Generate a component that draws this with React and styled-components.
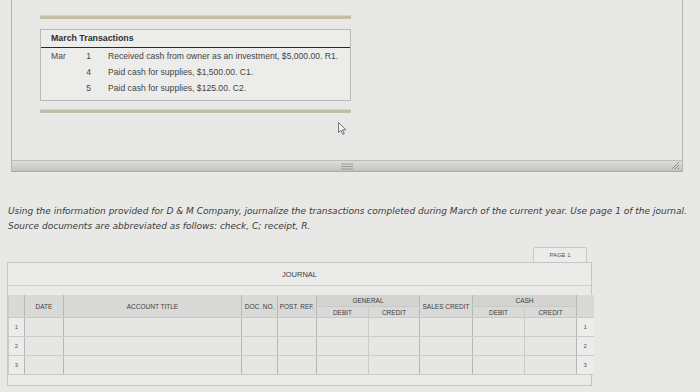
import React from "react";
import styled, { createGlobalStyle } from "styled-components";

const Global = createGlobalStyle`
  body {
    margin: 0;
    background: #e8e8e6;
    font-family: "Liberation Sans", Arial, sans-serif;
    color: #3a3a3a;
  }
`;

const Page = styled.div`
  width: 700px;
  height: 392px;
  overflow: hidden;
  position: relative;
`;

/* ---------- top scroll panel ---------- */
const TopPanel = styled.div`
  margin-left: 11px;
  width: 670px;
  height: 172px;
  border-left: 1px solid #b4b4b2;
  border-right: 1px solid #b4b4b2;
  display: flex;
  flex-direction: column;
  position: relative;
`;

const PanelBody = styled.div`
  flex: 1;
  padding: 15px 0 0 28px;
`;

const Stripe = styled.div`
  width: 311px;
  height: 3px;
  background: #c4bca6;
  border-top: 1px solid #d6d2c6;
  margin-bottom: ${(p) => p.$after || 0}px;
`;

const TransBox = styled.div`
  width: 309px;
  height: 70px;
  border: 1px solid #b9b9b7;
  background: #ececea;
  margin-bottom: 8px;
`;

const TransHead = styled.div`
  height: 17px;
  line-height: 17px;
  padding-left: 10px;
  font-weight: bold;
  font-size: 8.8px;
  color: #2e2e2e;
  border-bottom: 1.5px solid #2a2a2a;
`;

const TransRow = styled.div`
  display: grid;
  grid-template-columns: 30px 10px 1fr;
  padding-left: 10px;
  height: 16px;
  line-height: 16px;
  font-size: 8.6px;
  color: #454545;
  white-space: nowrap;
`;

const Day = styled.span`
  text-align: right;
`;

const Desc = styled.span`
  padding-left: 17px;
`;

const ScrollBar = styled.div`
  height: 10px;
  background: linear-gradient(#dcdcda, #cfcfcd 60%, #c2c2c0);
  border-top: 1px solid #bdbdbb;
  border-bottom: 1px solid #a9a9a7;
  display: flex;
  align-items: center;
  justify-content: center;
  position: relative;
`;

const Resize = styled.svg`
  position: absolute;
  right: 2px;
  bottom: 1px;
`;

const Cursor = styled.svg`
  position: absolute;
  left: 326px;
  top: 122px;
`;

/* ---------- instructions ---------- */
const Instructions = styled.div`
  padding: 32px 0 0 8px;
  font-family: "DejaVu Sans", Verdana, sans-serif;
  font-style: italic;
  font-size: 9px;
  line-height: 15px;
  color: #3c3c3c;
  white-space: nowrap;
`;

/* ---------- journal ---------- */
const JournalWrap = styled.div`
  margin: 13px 0 0 7px;
  width: 585px;
  position: relative;
`;

const Tab = styled.div`
  margin-left: 526px;
  width: 52px;
  height: 14px;
  border: 1px solid #c9c9c7;
  border-bottom: none;
  border-radius: 2px 2px 0 0;
  background: #ebebe9;
  font-size: 6px;
  color: #555;
  text-align: center;
  line-height: 15px;
`;

const JournalBox = styled.div`
  border: 1px solid #c6c6c4;
  background: #eaeae8;
`;

const Title = styled.div`
  height: 22px;
  line-height: 24px;
  text-align: center;
  font-size: 7.5px;
  color: #3d3d3d;
  border-bottom: 1px solid #cfcfcd;
`;

const Table = styled.table`
  margin-top: 9px;
  width: 585px;
  border-collapse: collapse;
  table-layout: fixed;
`;

const Th = styled.th`
  background: ${(p) => (p.$group ? "#d3d3d1" : "#d9d9d7")};
  font-weight: normal;
  font-size: 6.5px;
  color: #404040;
  height: ${(p) => p.$h || 10}px;
  padding: 0;
  text-align: center;
  border-left: 1px solid ${(p) => (p.$strong ? "#b8b8b6" : "#cdcdcb")};
  border-bottom: 1px solid #c9c9c7;
  white-space: nowrap;
`;

const Td = styled.td`
  height: 18px;
  padding: 0;
  background: ${(p) => (p.$num ? "#ececea" : "#e6e6e4")};
  border-left: 1px solid ${(p) => (p.$strong ? "#b6b6b4" : "#cbcbc9")};
  border-bottom: 1px solid #cbcbc9;
  font-size: 6px;
  color: #555;
  text-align: center;
`;

const Foot = styled.div`
  height: 10px;
`;

const cols = [16, 39, 178, 36, 39, 52, 51, 53, 52, 52, 17];
const strong = [false, true, true, true, true, true, false, true, true, false, true];

export default function App() {
  return (
    <Page>
      <Global />
      <TopPanel>
        <PanelBody>
          <Stripe $after={10} />
          <TransBox>
            <TransHead>March Transactions</TransHead>
            <TransRow>
              <span>Mar</span>
              <Day>1</Day>
              <Desc>Received cash from owner as an investment, $5,000.00. R1.</Desc>
            </TransRow>
            <TransRow>
              <span></span>
              <Day>4</Day>
              <Desc>Paid cash for supplies, $1,500.00. C1.</Desc>
            </TransRow>
            <TransRow>
              <span></span>
              <Day>5</Day>
              <Desc>Paid cash for supplies, $125.00. C2.</Desc>
            </TransRow>
          </TransBox>
          <Stripe />
        </PanelBody>
        <ScrollBar>
          <svg width="12" height="7" viewBox="0 0 12 7">
            <path d="M0 1h12M0 3.5h12M0 6h12" stroke="#9a9a98" strokeWidth="1" />
          </svg>
          <Resize width="9" height="9" viewBox="0 0 9 9">
            <path d="M1 8L8 1M4 8L8 4M7 8L8 7" stroke="#8e8e8c" strokeWidth="1" />
          </Resize>
        </ScrollBar>
        <Cursor width="9" height="13" viewBox="0 0 9 13">
          <path d="M0.5 0.5V10.5L3 8.3L4.8 12.3L6.3 11.6L4.6 7.8H8Z" fill="#f4f4f4" stroke="#555" strokeWidth="0.8" />
        </Cursor>
      </TopPanel>

      <Instructions>
        <div>
          Using the information provided for D &amp; M Company, journalize the transactions completed during March of the current year. Use page 1 of the journal.
        </div>
        <div>Source documents are abbreviated as follows: check, C; receipt, R.</div>
      </Instructions>

      <JournalWrap>
        <Tab>PAGE 1</Tab>
        <JournalBox>
          <Title>JOURNAL</Title>
          <Table>
            <colgroup>
              {cols.map((w, i) => (
                <col key={i} style={{ width: w }} />
              ))}
            </colgroup>
            <thead>
              <tr>
                <Th rowSpan={2} $h={11}></Th>
                <Th rowSpan={2} $strong>DATE</Th>
                <Th rowSpan={2} $strong>ACCOUNT TITLE</Th>
                <Th rowSpan={2} $strong>DOC. NO.</Th>
                <Th rowSpan={2} $strong>POST. REF.</Th>
                <Th colSpan={2} $group $strong $h={11}>GENERAL</Th>
                <Th rowSpan={2} $strong>SALES CREDIT</Th>
                <Th colSpan={2} $group $strong $h={11}>CASH</Th>
                <Th rowSpan={2} $strong></Th>
              </tr>
              <tr>
                <Th $strong $h={10}>DEBIT</Th>
                <Th $h={10}>CREDIT</Th>
                <Th $strong $h={10}>DEBIT</Th>
                <Th $h={10}>CREDIT</Th>
              </tr>
            </thead>
            <tbody>
              {[1, 2, 3].map((n) => (
                <tr key={n}>
                  {cols.map((_, i) => (
                    <Td key={i} $strong={strong[i]} $num={i === 0 || i === 10}>
                      {i === 0 || i === 10 ? n : ""}
                    </Td>
                  ))}
                </tr>
              ))}
            </tbody>
          </Table>
          <Foot />
        </JournalBox>
      </JournalWrap>
    </Page>
  );
}
